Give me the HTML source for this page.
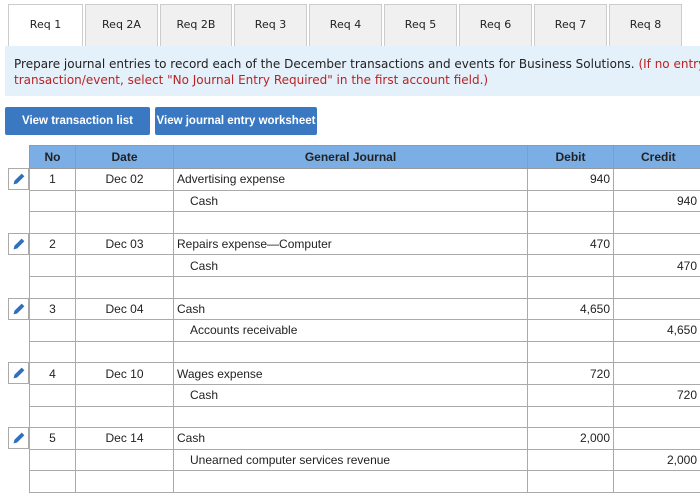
<!DOCTYPE html><html><head><style>
body{margin:0;width:700px;height:484px;overflow:hidden;background:#fff;font-family:"Liberation Sans",sans-serif;position:relative}
.tab{position:absolute;top:4px;height:42px;background:#f0f0f0;border:1px solid #ccc;border-bottom:none;box-sizing:border-box;color:#222;text-align:center;line-height:40px;font-family:"DejaVu Sans",sans-serif;font-size:11px}
.tab.a{background:#fff}
.info{position:absolute;top:46px;left:5px;width:695px;height:50px;background:#e4f0fa;font-family:"DejaVu Sans",sans-serif;font-size:12px;line-height:16px;color:#222;padding:10px 0 0 9px;box-sizing:border-box;white-space:nowrap}
.info span{color:#b22}
.btn{position:absolute;top:107px;height:28px;background:#3a78c2;color:#fff;font-weight:bold;font-size:11.5px;line-height:28px;text-align:center;border-radius:2px}
table{position:absolute;top:145px;left:29px;width:690px;table-layout:fixed;border-collapse:collapse;font-size:12px;color:#222}
td,th{border:1px solid #aaa;padding:0 3px;box-sizing:border-box;overflow:hidden;white-space:nowrap}
th{background:#7aaee4;height:23px;font-weight:bold;border-color:#999}
td{height:21.6px}
.c{text-align:center}.r{text-align:right}
.ed{position:absolute;left:8px;width:21px;height:22px;border:1px solid #aaa;box-sizing:border-box;background:#fff}
</style></head><body>
<div class="tab a" style="left:8px;width:75px">Req 1</div>
<div class="tab" style="left:85px;width:73px">Req 2A</div>
<div class="tab" style="left:160px;width:72px">Req 2B</div>
<div class="tab" style="left:234px;width:73px">Req 3</div>
<div class="tab" style="left:309px;width:73px">Req 4</div>
<div class="tab" style="left:384px;width:73px">Req 5</div>
<div class="tab" style="left:459px;width:73px">Req 6</div>
<div class="tab" style="left:534px;width:73px">Req 7</div>
<div class="tab" style="left:609px;width:73px">Req 8</div>
<div class="info">Prepare journal entries to record each of the December transactions and events for Business Solutions. <span>(If no entry<br>transaction/event, select "No Journal Entry Required" in the first account field.)</span></div>
<div class="btn" style="left:5px;width:145px">View transaction list</div>
<div class="btn" style="left:155px;width:162px">View journal entry worksheet</div>
<table>
<colgroup><col style="width:46px"><col style="width:98px"><col style="width:354px"><col style="width:86px"><col style="width:106px"></colgroup>
<tr><th>No</th><th>Date</th><th>General Journal</th><th>Debit</th><th style="text-align:left;padding-left:27px">Credit</th></tr>
<tr><td class="c">1</td><td class="c">Dec 02</td><td>Advertising expense</td><td class="r">940</td><td></td></tr>
<tr><td></td><td></td><td style="padding-left:16px">Cash</td><td></td><td style="padding-left:63px">940</td></tr>
<tr><td></td><td></td><td></td><td></td><td></td></tr>
<tr><td class="c">2</td><td class="c">Dec 03</td><td>Repairs expense—Computer</td><td class="r">470</td><td></td></tr>
<tr><td></td><td></td><td style="padding-left:16px">Cash</td><td></td><td style="padding-left:63px">470</td></tr>
<tr><td></td><td></td><td></td><td></td><td></td></tr>
<tr><td class="c">3</td><td class="c">Dec 04</td><td>Cash</td><td class="r">4,650</td><td></td></tr>
<tr><td></td><td></td><td style="padding-left:16px">Accounts receivable</td><td></td><td style="padding-left:53px">4,650</td></tr>
<tr><td></td><td></td><td></td><td></td><td></td></tr>
<tr><td class="c">4</td><td class="c">Dec 10</td><td>Wages expense</td><td class="r">720</td><td></td></tr>
<tr><td></td><td></td><td style="padding-left:16px">Cash</td><td></td><td style="padding-left:63px">720</td></tr>
<tr><td></td><td></td><td></td><td></td><td></td></tr>
<tr><td class="c">5</td><td class="c">Dec 14</td><td>Cash</td><td class="r">2,000</td><td></td></tr>
<tr><td></td><td></td><td style="padding-left:16px">Unearned computer services revenue</td><td></td><td style="padding-left:53px">2,000</td></tr>
<tr><td></td><td></td><td></td><td></td><td></td></tr>
</table>
<svg width="0" height="0" style="position:absolute"><defs><symbol id="p" viewBox="0 0 21 22"><path d="M5 17 L6 13 L14 5 L17 8 L9 16 Z" fill="#2f6fbf"/></symbol></defs></svg>
<svg class="ed" style="top:168px" viewBox="0 0 21 22"><use href="#p"/></svg>
<svg class="ed" style="top:233px" viewBox="0 0 21 22"><use href="#p"/></svg>
<svg class="ed" style="top:298px" viewBox="0 0 21 22"><use href="#p"/></svg>
<svg class="ed" style="top:362px" viewBox="0 0 21 22"><use href="#p"/></svg>
<svg class="ed" style="top:427px" viewBox="0 0 21 22"><use href="#p"/></svg>
</body></html>
